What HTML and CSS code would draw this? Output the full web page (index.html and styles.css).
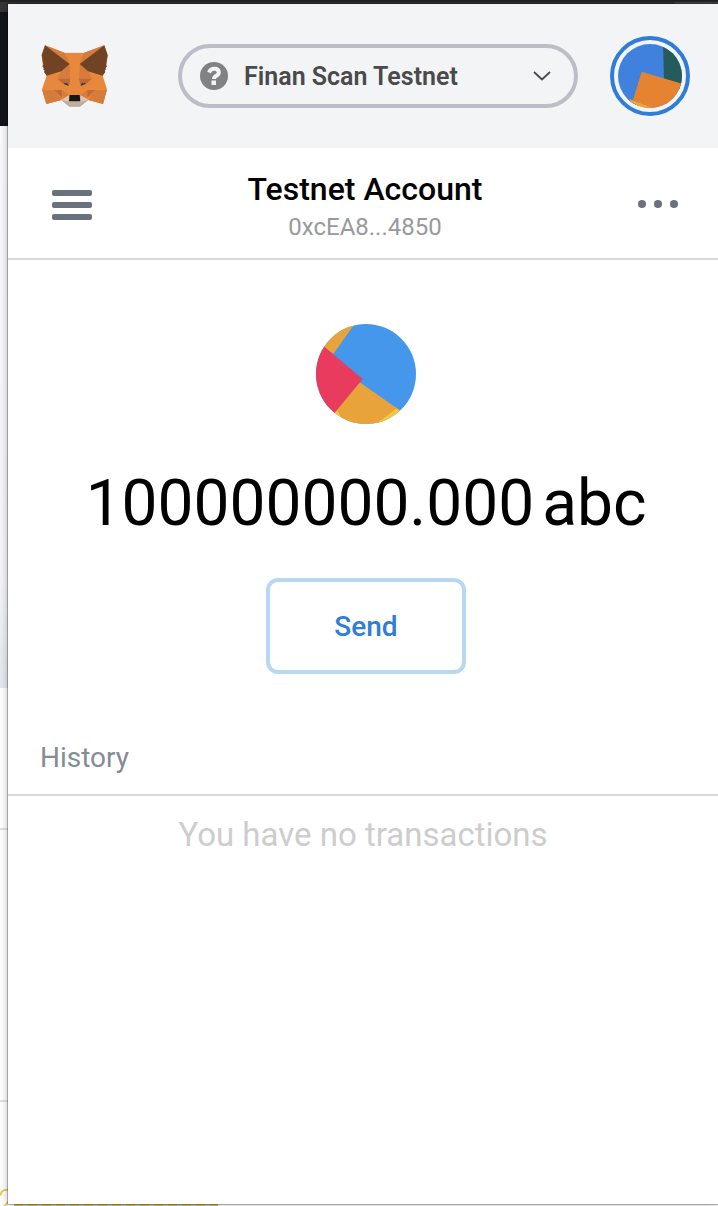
FILE: index.html
```html
<!DOCTYPE html>
<html lang="en">
<head>
<meta charset="utf-8">
<meta name="viewport" content="width=device-width, initial-scale=1">
<title>Testnet Account</title>
<link rel="stylesheet" href="styles.css">
</head>
<body>
<div class="backdrop" aria-hidden="true">
  <div class="backdrop-tabs"></div>
  <div class="backdrop-toolbar"></div>
  <div class="backdrop-dark"></div>
  <div class="backdrop-hero"></div>
  <div class="backdrop-row"></div>
  <div class="backdrop-row backdrop-row-tall"></div>
  <div class="backdrop-figure">2</div>
  <div class="backdrop-edge"></div>
</div>
<div class="popup">
  <header class="header">
    <svg class="logo" viewBox="120 135 204 186" role="img" aria-label="Fox logo">
      <path fill="#e8883a" d="M135 136L195 159H251L313 136L323 165L319 200L308 227L321 268L309 312L265 300L240 319H208L184 300L139 312L126 268L140 227L129 200L125 165Z"/>
      <path fill="#d57b3c" d="M135 136L195 159L209 192ZM313 136L251 159L239 192ZM209 192L211 236H172L184 214ZM239 192L237 236H276L264 214ZM126 269H164L184 300L139 312ZM321 269H283L265 300L309 312ZM186 269L189 295L206 286ZM262 269L259 295L242 286Z"/>
      <path fill="#e8883a" d="M209 192L224 190L239 192L236 238L242 286H206L212 238ZM187 250L207 258L210 284L186 270ZM261 250L241 258L238 284L262 270Z"/>
      <path fill="#c2673a" d="M172 236H211L207 257L187 250ZM276 236H237L241 257L261 250ZM163 269H186V294ZM285 269H262V294Z"/>
      <path fill="#704325" d="M135 136L209 192L184 214L140 227L132 216L134 211L129 208L132 205L127 199L130 194L125 166ZM313 136L239 192L264 214L308 227L316 216L314 211L319 208L316 205L321 199L318 194L323 166Z"/>
      <path fill="#d7c5b9" d="M184 300L206 286L208 304H240L242 286L265 299L240 319H208Z"/>
      <path fill="#c0ad9e" d="M185 301L208 305H240L264 300L240 320H208Z"/>
      <path fill="#2c3745" d="M190 251L200 246L206 258ZM258 251L248 246L242 258Z"/>
      <path fill="#8795a3" d="M195 247L201 246L199 251ZM253 247L247 246L249 251Z"/>
      <path fill="#161616" d="M209 285H239L241 304H207Z"/>
      <path fill="none" stroke="#e69a5b" d="M127 269H186M262 269H321M195 159H251"/>
    </svg>
    <button class="network" type="button">
      <svg class="network-icon" viewBox="0 0 28 28" aria-hidden="true">
        <circle cx="14" cy="14" r="14" fill="#808284"/>
        <path d="M9 10.5Q10.500 6.800 14.300 6.800Q18.800 6.800 18.800 10.500Q18.800 12.300 16.300 13.700Q14 15 14 17" fill="none" stroke="#f2f4f6" stroke-width="4"/>
        <path fill="#f2f4f6" d="M11.500 18.500H16V23H11.500Z"/>
      </svg>
      <span class="network-name">Finan Scan Testnet</span>
      <svg class="network-arrow" viewBox="0 0 20 12" aria-hidden="true"><path d="M2 2L10 9.500L18 2" fill="none" stroke="#4a4a4a" stroke-width="1.800"/></svg>
    </button>
    <button class="account" type="button" aria-label="Accounts">
      <svg class="account-icon" viewBox="0 0 192 192" aria-hidden="true">
        <defs><clipPath id="account-clip"><circle cx="96" cy="96" r="96"/></clipPath></defs>
        <g clip-path="url(#account-clip)">
          <path fill="#3f81dc" d="M0 0H192V192H0Z"/>
          <path fill="#265b5c" d="M135 0H192V140L138 110ZM30 166L60 176V192H30Z"/>
          <path fill="#f1a437" d="M34 165L120 196H50Z"/>
          <path fill="#e58331" d="M71 83L192 119V200H120L45 168Z"/>
        </g>
      </svg>
    </button>
  </header>
  <section class="account-bar">
    <button class="icon-button" type="button" aria-label="Menu">
      <svg class="bar-icon" viewBox="0 0 40 30"><path fill="#6a737d" d="M2 0H38Q40 0 40 2V4Q40 6 38 6H2Q0 6 0 4V2Q0 0 2 0ZM2 12H38Q40 12 40 14V16Q40 18 38 18H2Q0 18 0 16V14Q0 12 2 12ZM2 24H38Q40 24 40 26V28Q40 30 38 30H2Q0 30 0 28V26Q0 24 2 24Z"/></svg>
    </button>
    <button class="selected-account" type="button">
      <span class="account-name">Testnet Account</span>
      <span class="account-address">0xcEA8...4850</span>
    </button>
    <button class="icon-button" type="button" aria-label="Account options">
      <svg class="bar-icon" viewBox="0 0 40 30"><g fill="#6a737d"><circle cx="4" cy="14" r="4"/><circle cx="20" cy="14" r="4"/><circle cx="36" cy="14" r="4"/></g></svg>
    </button>
  </section>
  <main class="overview">
    <svg class="token" viewBox="0 0 300 300" aria-hidden="true">
      <defs><clipPath id="token-clip"><circle cx="150" cy="150" r="150"/></clipPath></defs>
      <g clip-path="url(#token-clip)">
        <path fill="#4597ec" d="M0 0H300V300H0Z"/>
        <path fill="#e8a43a" d="M0 0H116L52 90L0 55ZM131 175L260 265V300H40V270Z"/>
        <path fill="#f3c83f" d="M241 254L256 263L225 300H180ZM56 265L64 261L82 290L56 285Z"/>
        <path fill="#e83b5e" d="M25 68L140 165L56 266L0 300V50Z"/>
      </g>
    </svg>
    <div class="balance"><span>100000000.000</span><span>abc</span></div>
    <button class="send" type="button">Send</button>
  </main>
  <section class="history">
    <h2 class="history-title">History</h2>
    <p class="history-empty">You have no transactions</p>
  </section>
</div>
</body>
</html>
```
FILE: styles.css
```css
* {
  box-sizing: border-box;
}

body {
  margin: 0;
  min-height: 100vh;
  display: flex;
  position: relative;
  overflow-x: hidden;
  background: #fff;
  font-family: Roboto, "Liberation Sans", sans-serif;
}

button {
  margin: 0;
  padding: 0;
  border: 0;
  background: none;
  font-family: inherit;
  cursor: pointer;
}

/* Page behind the popup */
.backdrop {
  position: absolute;
  inset: 0;
  overflow: hidden;
}

.backdrop-tabs {
  height: 2px;
  background: #222;
}

.backdrop-toolbar {
  height: 10px;
  background: linear-gradient(90deg, #363636 94%, #4a4a4a 94%);
}

.backdrop-dark {
  height: 114px;
  background: #12161a;
}

.backdrop-hero {
  height: 562px;
  background: linear-gradient(#fafafd, #f4f4fa 80%, #e6e6f0);
}

.backdrop-row {
  height: 142px;
  border-bottom: 2px solid #dfe1e8;
}

.backdrop-row-tall {
  height: 272px;
}

.backdrop-figure {
  position: absolute;
  left: -2px;
  bottom: -14px;
  color: #e9cb3f;
  font-size: 32px;
  font-weight: 300;
  line-height: 40px;
}

.backdrop-edge {
  position: absolute;
  left: 14px;
  bottom: 0;
  width: 204px;
  height: 2px;
  background: repeating-linear-gradient(90deg, #d5bb45 0 9px, #c4c4c4 9px 14px);
}

/* Popup */
.popup {
  position: relative;
  flex: 1;
  min-width: 0;
  margin: 4px 0 2px 8px;
  background: #fff;
  box-shadow: 0 0 0 1px rgba(0, 0, 0, 0.25), 0 0 8px rgba(0, 0, 0, 0.3);
}

.header {
  display: flex;
  align-items: center;
  gap: 32px;
  height: 144px;
  padding: 0 28px 0 32px;
  background: #f2f4f6;
}

.logo {
  width: 68px;
  height: 62px;
  flex: none;
}

.network {
  display: flex;
  align-items: center;
  width: 400px;
  height: 64px;
  margin-left: auto;
  padding: 0 22px 0 18px;
  border: 4px solid #bbbec6;
  border-radius: 32px;
  color: #4a4a4a;
}

.network-icon {
  width: 28px;
  height: 28px;
}

.network-name {
  margin-left: 16px;
  font-size: 25px;
  font-weight: 600;
}

.network-arrow {
  width: 20px;
  height: 12px;
  margin-left: auto;
}

.account {
  flex: none;
  width: 80px;
  height: 80px;
  padding: 4px;
  border: 4px solid #2f7dd6;
  border-radius: 50%;
}

.account-icon {
  display: block;
  width: 64px;
  height: 64px;
}

.account-bar {
  display: flex;
  align-items: center;
  justify-content: space-between;
  height: 112px;
  padding: 4px 40px 0 44px;
  border-bottom: 2px solid #d8d9de;
}

.bar-icon {
  display: block;
  width: 40px;
  height: 30px;
}

.selected-account {
  display: flex;
  flex-direction: column;
  align-items: center;
}

.account-name {
  color: #000;
  font-size: 32px;
  font-weight: 500;
  line-height: 44px;
}

.account-address {
  color: #989a9b;
  font-size: 24px;
  line-height: 32px;
}

.overview {
  display: flex;
  flex-direction: column;
  align-items: center;
  padding: 64px 0 48px 6px;
}

.token {
  width: 100px;
  height: 100px;
}

.balance {
  display: flex;
  gap: 8px;
  margin-top: 38px;
  color: #000;
  font-size: 64px;
  line-height: 84px;
}

.send {
  width: 200px;
  height: 96px;
  margin-top: 32px;
  border: 4px solid #b8d8f0;
  border-radius: 12px;
  color: #2f7dd6;
  font-size: 28px;
  font-weight: 500;
}

.history-title {
  margin: 0;
  padding: 16px 32px;
  border-bottom: 2px solid #d8d9de;
  color: #848c96;
  font-size: 28px;
  font-weight: 400;
  line-height: 40px;
}

.history-empty {
  margin: 0;
  padding: 16px 0;
  color: #cdcdcd;
  font-size: 33px;
  line-height: 46px;
  text-align: center;
}
```
